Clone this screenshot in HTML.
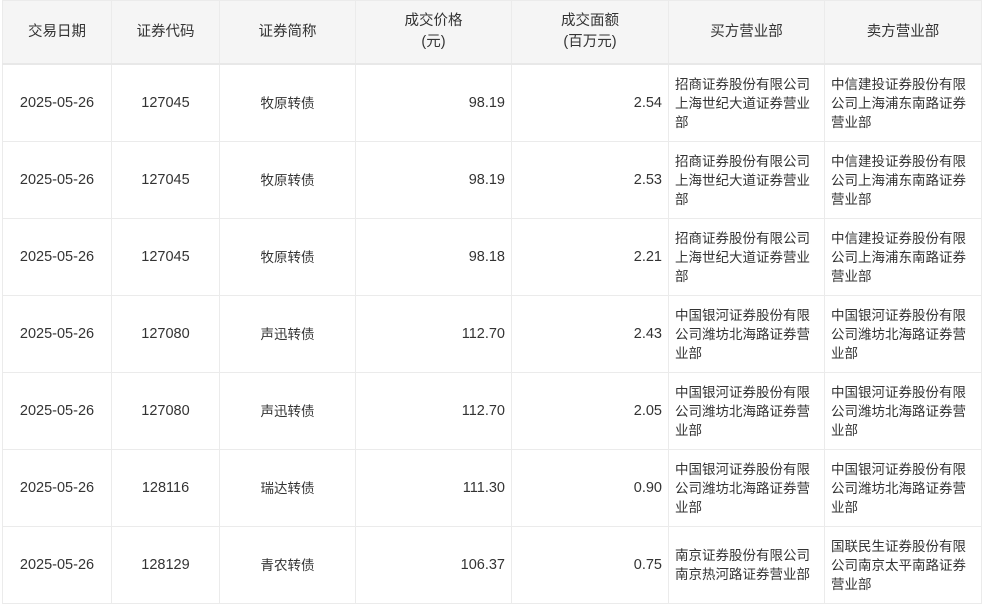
<!DOCTYPE html>
<html><head><meta charset="utf-8"><style>
body{margin:0;background:#fff;font-family:"Liberation Sans","Noto Sans CJK SC",sans-serif;color:#333;}
table{position:absolute;left:2px;top:0;border-collapse:collapse;table-layout:fixed;width:979px;font-size:13.5px;}
td,th{border:1px solid #ebebeb;padding:0 6px;line-height:19px;}
th{background:#f5f5f5;font-weight:normal;font-size:14.5px;height:62px;text-align:center;border-bottom:2px solid #e8e8e8;line-height:21px;}
td{height:76px;}
.c{text-align:center}.r{text-align:right;font-size:14.5px}.n{text-align:center;font-size:14.5px}
</style></head><body>
<table>
<colgroup><col style="width:109px"><col style="width:108px"><col style="width:136px"><col style="width:156px"><col style="width:157px"><col style="width:156px"><col style="width:157px"></colgroup>
<tr><th>交易日期</th><th>证券代码</th><th>证券简称</th><th>成交价格<br>(元)</th><th>成交面额<br>(百万元)</th><th>买方营业部</th><th>卖方营业部</th></tr>
<tr><td class="n">2025-05-26</td><td class="n">127045</td><td class="c">牧原转债</td><td class="r">98.19</td><td class="r">2.54</td><td>招商证券股份有限公司上海世纪大道证券营业部</td><td>中信建投证券股份有限公司上海浦东南路证券营业部</td></tr>
<tr><td class="n">2025-05-26</td><td class="n">127045</td><td class="c">牧原转债</td><td class="r">98.19</td><td class="r">2.53</td><td>招商证券股份有限公司上海世纪大道证券营业部</td><td>中信建投证券股份有限公司上海浦东南路证券营业部</td></tr>
<tr><td class="n">2025-05-26</td><td class="n">127045</td><td class="c">牧原转债</td><td class="r">98.18</td><td class="r">2.21</td><td>招商证券股份有限公司上海世纪大道证券营业部</td><td>中信建投证券股份有限公司上海浦东南路证券营业部</td></tr>
<tr><td class="n">2025-05-26</td><td class="n">127080</td><td class="c">声迅转债</td><td class="r">112.70</td><td class="r">2.43</td><td>中国银河证券股份有限公司潍坊北海路证券营业部</td><td>中国银河证券股份有限公司潍坊北海路证券营业部</td></tr>
<tr><td class="n">2025-05-26</td><td class="n">127080</td><td class="c">声迅转债</td><td class="r">112.70</td><td class="r">2.05</td><td>中国银河证券股份有限公司潍坊北海路证券营业部</td><td>中国银河证券股份有限公司潍坊北海路证券营业部</td></tr>
<tr><td class="n">2025-05-26</td><td class="n">128116</td><td class="c">瑞达转债</td><td class="r">111.30</td><td class="r">0.90</td><td>中国银河证券股份有限公司潍坊北海路证券营业部</td><td>中国银河证券股份有限公司潍坊北海路证券营业部</td></tr>
<tr><td class="n">2025-05-26</td><td class="n">128129</td><td class="c">青农转债</td><td class="r">106.37</td><td class="r">0.75</td><td>南京证券股份有限公司南京热河路证券营业部</td><td>国联民生证券股份有限公司南京太平南路证券营业部</td></tr>
</table>
</body></html>
